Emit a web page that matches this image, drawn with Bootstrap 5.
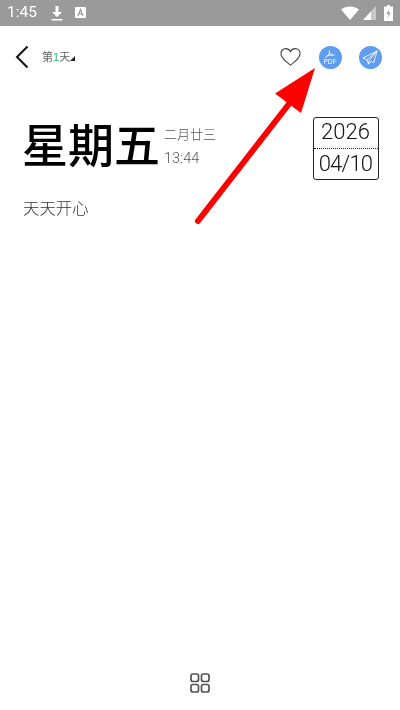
<!DOCTYPE html>
<html lang="zh">
<head>
  <meta charset="UTF-8">
  <title>第1天</title>
  <link href="https://cdn.jsdelivr.net/npm/bootstrap@5.3.3/dist/css/bootstrap.min.css" rel="stylesheet">
  <style>
    body {
      width: 400px;
      height: 710px;
      overflow: hidden;
      background: #fff;
      font-family: "Liberation Sans", "Noto Sans CJK SC", sans-serif;
    }
    .phone { position: relative; height: 710px; will-change: transform; }
    .status-bar { height: 26px; background: #9a9a9a; color: #fff; padding: 0 7px; }
    .status-time { font-family: Roboto, sans-serif; font-size: 15.5px; width: 44px; }
    .status-a { margin-left: 12px; }
    .top-bar { height: 62px; padding: 0 18.5px 0 15px; }
    .day-label { font-size: 11px; color: #666; margin-left: 13px; margin-top: 1px; }
    .day-num { color: #35b779; }
    .day-caret { width: 5px; height: 5px; margin-top: 3px; }
    .heart-icon { margin-right: 1px; }
    .round-btn { width: 23px; height: 23px; border-radius: 50%; background: #5f9eee; color: #fff; margin-left: 17px; }
    .pdf-text { font-size: 6.5px; line-height: 6px; margin-top: 1px; }
    .head-block { padding: 30px 21.5px 0 22px; }
    .weekday { font-size: 46px; font-weight: 500; line-height: 56px; color: #000; }
    .lunar-col { margin-left: 4px; padding-top: 7px; color: #555; }
    .lunar-date { font-size: 13px; line-height: 20px; font-weight: 300; }
    .lunar-time { font-family: Roboto, sans-serif; font-size: 14.5px; line-height: 20px; font-weight: 300; margin-top: 4px; }
    .date-box { width: 66px; height: 63px; margin-top: -1px; border: 1px solid #222; border-radius: 3px; font-family: Roboto, sans-serif; font-size: 22px; font-weight: 300; color: #111; }
    .date-year { height: 50%; border-bottom: 1px dotted #222; padding-bottom: 2px; }
    .date-day { height: 50%; letter-spacing: -.8px; }
    .note-text { padding: 16px 23px 0; font-size: 16.4px; font-weight: 300; color: #333; line-height: 24px; }
    .bottom-bar { position: absolute; left: 0; right: 0; bottom: 17px; }
    .red-arrow { position: absolute; left: 0; top: 0; pointer-events: none; }
  </style>
</head>
<body>
  <div class="phone">
    <div class="status-bar d-flex align-items-center">
      <span class="status-time">1:45</span>
      <svg width="12" height="16" viewBox="0 0 12 16"><path d="M4.500 1h3v6h3.500L6 12 1 7h3.500z" fill="#fff"/><rect x="0.500" y="14" width="11" height="1.500" fill="#fff"/></svg>
      <svg class="status-a" width="12" height="12" viewBox="0 0 12 12"><rect width="11" height="11" rx="1" fill="#fff"/><path d="M3 9 5.500 2.500 8 9M4 7h3" stroke="#999" stroke-width="1.200" fill="none"/></svg>
      <svg class="ms-auto" width="18" height="14" viewBox="0 0 18 14"><path d="M0 3.500C5 -.5 13 -.5 18 3.500L9 14z" fill="#fff"/></svg>
      <svg class="ms-1" width="13" height="14" viewBox="0 0 13 14"><path d="M0 14 13 0v14z" fill="#c8c8c8"/><path d="M0 14 8 5.500V14z" fill="#fff"/></svg>
      <svg class="ms-2" width="9" height="16" viewBox="0 0 9 16"><path d="M3 0h3v1.500h3V16H0V1.500h3z" fill="#fff"/><path d="M5 4 2.500 9h2L4 13l2.500-5.500h-2z" fill="#9a9a9a"/></svg>
    </div>

    <div class="top-bar d-flex align-items-center">
      <svg width="14" height="24" viewBox="0 0 14 24"><path d="M12.500 1.500 2 12l10.500 10.500" fill="none" stroke="#111" stroke-width="2"/></svg>
      <span class="day-label">第<span class="day-num">1</span>天</span>
      <svg class="day-caret" viewBox="0 0 5 5"><path d="M5 0v5H0z" fill="#222"/></svg>
      <svg class="heart-icon ms-auto" width="21" height="20" viewBox="0 0 22 20"><path d="M11 18.500C6 14.500 1 11 1 6.500 1 3.300 3.400 1.200 6 1.200c2.100 0 3.900 1 5 3 1.100-2 2.900-3 5-3 2.600 0 5 2.100 5 5.300 0 4.500-5 8-10 12z" fill="none" stroke="#444" stroke-width="1.200"/></svg>
      <div class="round-btn d-flex flex-column align-items-center justify-content-center">
        <svg width="10" height="8" viewBox="0 0 10 8"><path d="M4.500 0c-.4 1.800 0 3 1 4 1 .8 2.400 1.200 4 1.200M4.500 2.500C4 4.500 2.500 6.500 .5 7.500M1.500 6c2-.7 4-1 6.500-1" fill="none" stroke="#fff" stroke-width=".9"/></svg>
        <span class="pdf-text">PDF</span>
      </div>
      <div class="round-btn d-flex align-items-center justify-content-center">
        <svg width="16" height="15" viewBox="0 0 17 16"><path d="M16 1 1 8.500 5 10.500 7 15 9.500 12 12.500 13.500zM5 10.500 16 1 7 12v3" fill="none" stroke="#fff" stroke-width=".9" stroke-linejoin="round"/></svg>
      </div>
    </div>

    <div class="head-block d-flex align-items-start">
      <div class="weekday">星期五</div>
      <div class="lunar-col">
        <div class="lunar-date">二月廿三</div>
        <div class="lunar-time">13:44</div>
      </div>
      <div class="date-box ms-auto">
        <div class="date-year d-flex align-items-center justify-content-center">2026</div>
        <div class="date-day d-flex align-items-center justify-content-center">04/10</div>
      </div>
    </div>

    <div class="note-text">天天开心</div>

    <div class="bottom-bar d-flex justify-content-center">
      <svg width="20" height="20" viewBox="0 0 20 20"><g fill="none" stroke="#555" stroke-width="1.700"><rect x="1" y="1" width="7.500" height="7.500" rx="2"/><rect x="11.500" y="1" width="7.500" height="7.500" rx="2"/><rect x="1" y="11.500" width="7.500" height="7.500" rx="2"/><rect x="11.500" y="11.500" width="7.500" height="7.500" rx="2"/></g></svg>
    </div>

    <svg class="red-arrow" width="400" height="710" viewBox="0 0 400 710"><path d="M198 221 292 100" stroke="#f00" stroke-width="6" stroke-linecap="round" fill="none"/><path d="M315 68 275 93.500 301 113z" fill="#f00"/></svg>
  </div>
</body>
</html>
